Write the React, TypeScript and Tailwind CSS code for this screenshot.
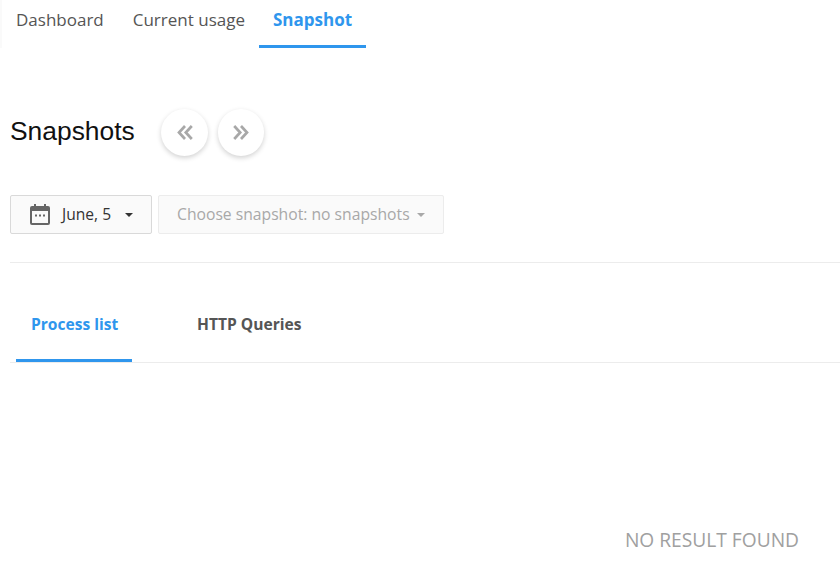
function CalendarIcon() {
  return (
    <svg className="w-[20px] h-[21px] text-[#666666]" viewBox="0 0 20 21" fill="currentColor">
      <path d="M4 0h2v2h8V0h2v2h2a2 2 0 0 1 2 2v15a2 2 0 0 1-2 2H2a2 2 0 0 1-2-2V4a2 2 0 0 1 2-2h2zM2 7v12h16V7z" fillRule="evenodd" />
      <path d="M5 10.5h2v2H5zM9 10.5h2v2H9zM13 10.5h2v2h-2z" />
    </svg>
  )
}

function Chevrons({ flip }: { flip?: boolean }) {
  return (
    <svg className={flip ? 'w-[16px] h-[15px] -scale-x-100' : 'w-[16px] h-[15px]'} viewBox="0 0 16 15" fill="none" stroke="#a8a8a8" strokeWidth={2.7}>
      <path d="M8 1L2 7.5L8 14" />
      <path d="M14.8 1L8.8 7.5L14.8 14" />
    </svg>
  )
}

function Caret({ className }: { className: string }) {
  return <span className={`w-0 h-0 border-x-[4px] border-x-transparent border-t-[4px] ${className}`} />
}

export default function App() {
  return (
    <div className="w-[840px] h-[577px] overflow-hidden bg-white font-['Open_Sans','Noto_Sans',sans-serif]">
      {/* Top tabs */}
      <div className="flex h-[48px] text-[17px] text-[#555555] border-l-2 border-[#fafafa]">
        <div className="px-[14px] pt-[7px]">Dashboard</div>
        <div className="pl-[15px] pr-[14px] pt-[7px]">Current usage</div>
        <div className="px-[14px] pt-[7px] font-bold text-[#2f96ed] border-b-[3px] border-[#2f96ed]">
          Snapshot
        </div>
      </div>

      {/* Heading */}
      <div className="flex items-center mt-[60px] pl-[10px] h-[48px]">
        <h1 className="w-[151px] text-[26.4px] text-[#111111] font-['Liberation_Sans',sans-serif]">Snapshots</h1>
        <button className="flex items-center justify-center w-[47px] h-[47px] rounded-full bg-white shadow-[0_2px_5px_rgba(0,0,0,0.18)]">
          <Chevrons />
        </button>
        <button className="ml-[10px] flex items-center justify-center w-[46px] h-[47px] rounded-full bg-white shadow-[0_2px_5px_rgba(0,0,0,0.18)]">
          <Chevrons flip />
        </button>
      </div>

      {/* Pickers */}
      <div className="flex mt-[39px] ml-[10px] gap-[6px] h-[39px]">
        <div className="flex items-center w-[142px] pl-[19px] bg-[#fafafa] border border-[#d9d9d9] rounded-[2px] text-[15.6px] text-[#333333]">
          <CalendarIcon />
          <span className="ml-[12px]">June, 5</span>
          <Caret className="ml-[14px] border-t-[#333333]" />
        </div>
        <div className="flex items-center w-[286px] pl-[18px] bg-[#fafafa] border border-[#ececec] rounded-[2px] text-[15.7px] text-[#a8a8a8]">
          <span>Choose snapshot: no snapshots</span>
          <Caret className="ml-[7px] border-t-[#a8a8a8]" />
        </div>
      </div>

      <div className="mt-[28px] ml-[10px] border-t border-[#ececec]" />

      {/* Inner tabs */}
      <div className="flex h-[100px] ml-[10px] border-b border-[#ececec] text-[15.6px] font-bold">
        <div className="ml-[6px] w-[116px] h-[99px] pt-[50px] pl-[15px] text-[#2f96ed] border-b-[3px] border-[#2f96ed]">
          Process list
        </div>
        <div className="ml-[65px] pt-[50px] text-[#555555]">HTTP Queries</div>
      </div>

      {/* Empty state */}
      <div className="flex justify-end mt-[163px] pr-[41px] text-[19.2px] text-[#a0a0a0]">NO RESULT FOUND</div>
    </div>
  )
}
